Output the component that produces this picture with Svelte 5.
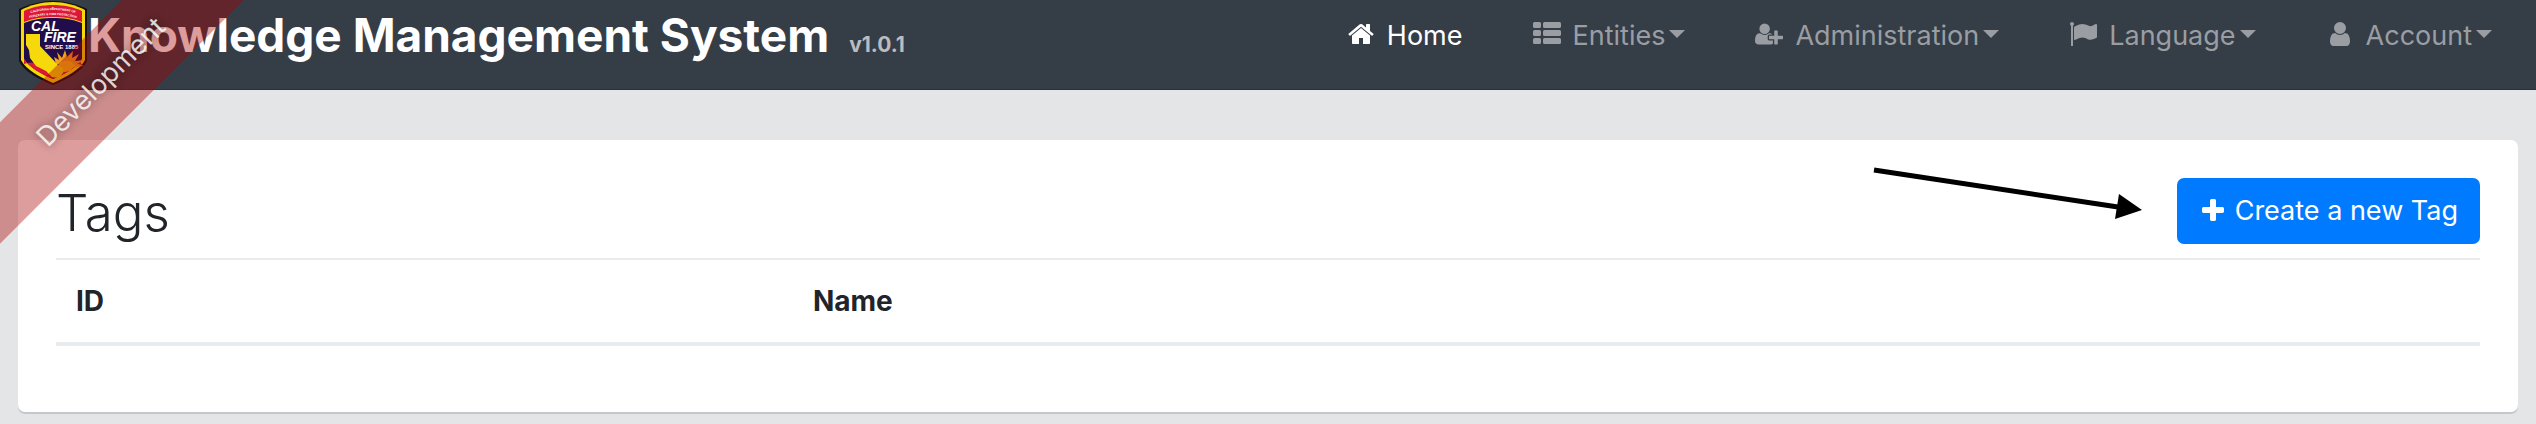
<script>
  const paths = {
    home: 'M1472 992v480q0 26-19 45t-45 19h-384v-384h-256v384h-384q-26 0-45-19t-19-45v-480q0-1 .5-3t.5-3l575-474 575 474q1 2 1 6zm223-69l-62 74q-8 9-21 11h-3q-13 0-21-7l-692-577-692 577q-12 8-24 7-13-2-21-11l-62-74q-8-10-7-23.5t11-21.5l719-599q32-26 76-26t76 26l244 204v-195q0-14 9-23t23-9h192q14 0 23 9t9 23v408l219 182q10 8 11 21.5t-7 23.5z',
    list: 'M96 128h320q96 0 96 96v192q0 96-96 96h-320q-96 0-96-96v-192q0-96 96-96zm0 512h320q96 0 96 96v192q0 96-96 96h-320q-96 0-96-96v-192q0-96 96-96zm0 512h320q96 0 96 96v192q0 96-96 96h-320q-96 0-96-96v-192q0-96 96-96zM736 128h960q96 0 96 96v192q0 96-96 96h-960q-96 0-96-96v-192q0-96 96-96zm0 512h960q96 0 96 96v192q0 96-96 96h-960q-96 0-96-96v-192q0-96 96-96zm0 512h960q96 0 96 96v192q0 96-96 96h-960q-96 0-96-96v-192q0-96 96-96z',
    userPlus: 'M704 896q-159 0-271.5-112.5t-112.5-271.5 112.5-271.5 271.5-112.5 271.5 112.5 112.5 271.5-112.5 271.5-271.5 112.5zm960 128h352q13 0 22.5 9.5t9.5 22.5v192q0 13-9.5 22.5t-22.5 9.5h-352v352q0 13-9.5 22.5t-22.5 9.5h-192q-13 0-22.5-9.5t-9.5-22.5v-352h-352q-13 0-22.5-9.5t-9.5-22.5v-192q0-13 9.5-22.5t22.5-9.5h352v-352q0-13 9.5-22.5t22.5-9.5h192q13 0 22.5 9.5t9.5 22.5v352zm-736 224q0 52 38 90t90 38h256v238q-68 50-171 50h-874q-121 0-194-69t-73-190q0-53 3.5-103.5t14-109 26.5-108.5 43-97.5 62-81 85.5-53.5 111.5-20q19 0 39 17 79 61 154.5 91.5t164.5 30.5 164.5-30.5 154.5-91.5q20-17 39-17 132 0 217 96h-223q-52 0-90 38t-38 90v192z',
    flag: 'M320 256q0 72-64 110v1266q0 13-9.5 22.5t-22.5 9.5h-64q-13 0-22.5-9.5t-9.5-22.5v-1266q-64-38-64-110 0-53 37.5-90.5t90.5-37.5 90.5 37.5 37.5 90.5zm1472 64v763q0 25-12.5 38.5t-39.5 27.5q-215 116-369 116-61 0-123.5-22t-108.5-48-115.5-48-142.5-22q-192 0-464 146-17 9-33 9-26 0-45-19t-19-45v-742q0-32 31-55 21-14 79-43 236-120 421-120 107 0 200 29t219 88q38 19 88 19 54 0 117.5-21t110-47 88-47 54.5-21q26 0 45 19t19 45z',
    user: 'M1536 1399q0 109-62.5 187t-150.5 78h-854q-88 0-150.5-78t-62.5-187q0-85 8.5-160.5t31.5-152 58.5-131 94-89 134.5-34.5q131 128 313 128t313-128q76 0 134.5 34.5t94 89 58.5 131 31.5 152 8.5 160.5zm-256-887q0 159-112.5 271.5t-271.5 112.5-271.5-112.5-112.5-271.5 112.5-271.5 271.5-112.5 271.5 112.5 112.5 271.5z',
    plus: 'M1600 736v192q0 40-28 68t-68 28h-416v416q0 40-28 68t-68 28h-192q-40 0-68-28t-28-68v-416h-416q-40 0-68-28t-28-68v-192q0-40 28-68t68-28h416v-416q0-40 28-68t68-28h192q40 0 68 28t28 68v416h416q40 0 68 28t28 68z'
  };

  const menus = [
    { label: 'Entities', icon: 'list' },
    { label: 'Administration', icon: 'userPlus', box: '0 0 2048 1792' },
    { label: 'Language', icon: 'flag' },
    { label: 'Account', icon: 'user' }
  ];
</script>

{#snippet icon(name, box = '0 0 1792 1792')}
  <svg class="icon" viewBox={box} aria-hidden="true"><path d={paths[name]} /></svg>
{/snippet}

<div class="ribbon"><a href="#dev">Development</a></div>

<header class="navbar">
  <a class="brand" href="#home">
    <svg class="logo" viewBox="0 0 70 85" aria-hidden="true">
      <path d="M35 1C46 1 59 4 69 9V61C64 72 49 79 35 85C21 79 6 72 1 61V9C11 4 24 1 35 1Z" fill="#15100c" />
      <path d="M35 2C46 2 58 5 67 10V60C62 70 48 77 35 83C22 77 8 70 3 60V10C12 5 24 2 35 2Z" fill="#f6d90a" />
      <path d="M35 5C45 5 56 7 64 11V22C54 18 45 17 35 17C25 17 16 18 6 22V11C14 7 25 5 35 5Z" fill="#dc1738" />
      <path d="M6 23C16 19 25 18 35 18C45 18 54 19 64 23V59C59 67 47 74 35 79C23 74 11 67 6 59Z" fill="#210d4c" />
      <path d="M6 64Q15 60 24 66L34 69Q48 61 64 65L62 61C59 67 47 74 35 79C23 74 11 67 6 59Z" fill="#dc1738" />
      <path d="M38 64L36 57L41 60L39 52L44 58L47 50L49 57L55 51L54 58L61 54L57 61L66 60L59 64L66 66L57 67Z" fill="#f0a01c" />
      <path d="M40 66A9 8 0 0 1 57 66L52 71L42 73Z" fill="#f6bd13" />
      <path d="M8 34H22V46L40 65L45 68V73L41 78L34 77L28 71L18 66L12 58L11 50L8 45Z" fill="#f6d90a" />
      <path id="crest-top" d="M6 15Q35 5 64 15" fill="none" />
      <path id="crest-low" d="M5 20Q35 10 65 20" fill="none" />
      <text class="crest"><textPath href="#crest-top" startOffset="50%">CALIFORNIA DEPARTMENT OF</textPath></text>
      <text class="crest"><textPath href="#crest-low" startOffset="50%">FORESTRY &amp; FIRE PROTECTION</textPath></text>
      <text class="word" x="13" y="31">CAL</text>
      <text class="word" x="26" y="42">FIRE</text>
      <text class="since" x="27" y="49">SINCE 1885</text>
    </svg>
    <span class="title">Knowledge Management System</span>
    <span class="version">v1.0.1</span>
  </a>
  <nav>
    <a class="item active" href="#home">{@render icon('home')}<span>Home</span></a>
    {#each menus as menu}
      <button class="item" type="button" aria-haspopup="true">
        {@render icon(menu.icon, menu.box)}<span>{menu.label}</span><i class="caret"></i>
      </button>
    {/each}
  </nav>
</header>

<main class="card">
  <div class="heading">
    <h2>Tags</h2>
    <button class="create" type="button">
      {@render icon('plus')}<span>Create a new Tag</span>
    </button>
    <svg class="arrow" viewBox="0 0 270 56" aria-hidden="true">
      <path d="M2 5L246 42" stroke="#000" stroke-width="5" />
      <path d="M247 29L270 45L243 54Z" />
    </svg>
  </div>
  <table>
    <colgroup><col class="id-col" /><col class="name-col" /><col /></colgroup>
    <thead>
      <tr><th scope="col">ID</th><th scope="col">Name</th><td></td></tr>
    </thead>
  </table>
</main>

<style>
  :global(body) {
    background: #e4e5e6;
    color: #212529;
    font: 27px/42px Inter, "Liberation Sans", sans-serif;
    overflow-x: hidden;
  }

  button {
    border: 0;
    font: inherit;
    cursor: pointer;
  }

  .icon {
    width: 28px;
    height: 28px;
    fill: currentColor;
    flex: none;
  }

  .ribbon {
    position: absolute;
    z-index: 2;
    left: -109px;
    top: 39px;
    width: 420px;
    line-height: 86px;
    text-align: center;
    background: rgba(170, 0, 0, 0.385);
    transform: rotate(-45deg);
  }

  .ribbon a {
    color: rgba(255, 255, 255, 0.82);
    text-decoration: none;
    text-shadow: 0 0 8px rgba(0, 0, 0, 0.45);
  }

  .navbar {
    display: flex;
    justify-content: space-between;
    align-items: flex-start;
    box-sizing: border-box;
    height: 90px;
    padding: 0 44px 0 18px;
    background: #353d47;
    border-bottom: 1px solid #2d3040;
  }

  .brand {
    display: flex;
    align-items: baseline;
    color: #fff;
    font-weight: 700;
    text-decoration: none;
    white-space: nowrap;
  }

  .logo {
    width: 70px;
    height: 85px;
    align-self: flex-start;
  }

  .logo text {
    fill: #fff;
    font-family: "Liberation Sans", Arial, sans-serif;
    font-weight: 700;
  }

  .logo .crest {
    font-size: 3px;
    text-anchor: middle;
  }

  .logo .word {
    font-size: 14px;
    font-style: italic;
  }

  .logo .since {
    font-size: 6px;
  }

  .title {
    font-size: 46px;
    line-height: 70px;
  }

  .version {
    margin-left: 20px;
    font-size: 21px;
    color: #babcbf;
  }

  nav {
    display: flex;
    gap: 70px;
    padding-top: 15px;
  }

  .item {
    display: flex;
    align-items: center;
    gap: 12px;
    padding: 0;
    background: none;
    color: #9a9ea3;
    text-decoration: none;
    white-space: nowrap;
  }

  .item .icon {
    margin-bottom: 4px;
  }

  .active {
    color: #fff;
  }

  .caret {
    margin-left: -8px;
    margin-bottom: 4px;
    border: 8px solid transparent;
    border-top-color: currentColor;
    border-bottom: 0;
  }

  .card {
    margin: 50px 18px 10px;
    padding: 38px 38px 66px;
    background: #fff;
    border-radius: 7px;
    box-shadow: 0 2px 0 #c6c7c9;
  }

  .heading {
    position: relative;
    display: flex;
    justify-content: space-between;
    align-items: flex-start;
    padding-bottom: 14px;
  }

  h2 {
    margin: 0;
    font-size: 51px;
    line-height: 70px;
    height: 66px;
    font-weight: 300;
  }

  .create {
    display: flex;
    align-items: center;
    gap: 8px;
    padding: 12px 22px;
    border-radius: 7px;
    background: #007bff;
    color: #fff;
  }

  .arrow {
    position: absolute;
    right: 338px;
    top: -13px;
    width: 270px;
    height: 56px;
  }

  table {
    width: 100%;
    table-layout: fixed;
    border-collapse: separate;
    border-spacing: 0;
    font-size: 28px;
  }

  .id-col,
  .name-col {
    width: 30.4%;
  }

  th,
  td {
    padding: 20px;
    text-align: left;
    border-top: 2px solid #e9ecef;
    border-bottom: 4px solid #e9ecef;
  }
</style>
